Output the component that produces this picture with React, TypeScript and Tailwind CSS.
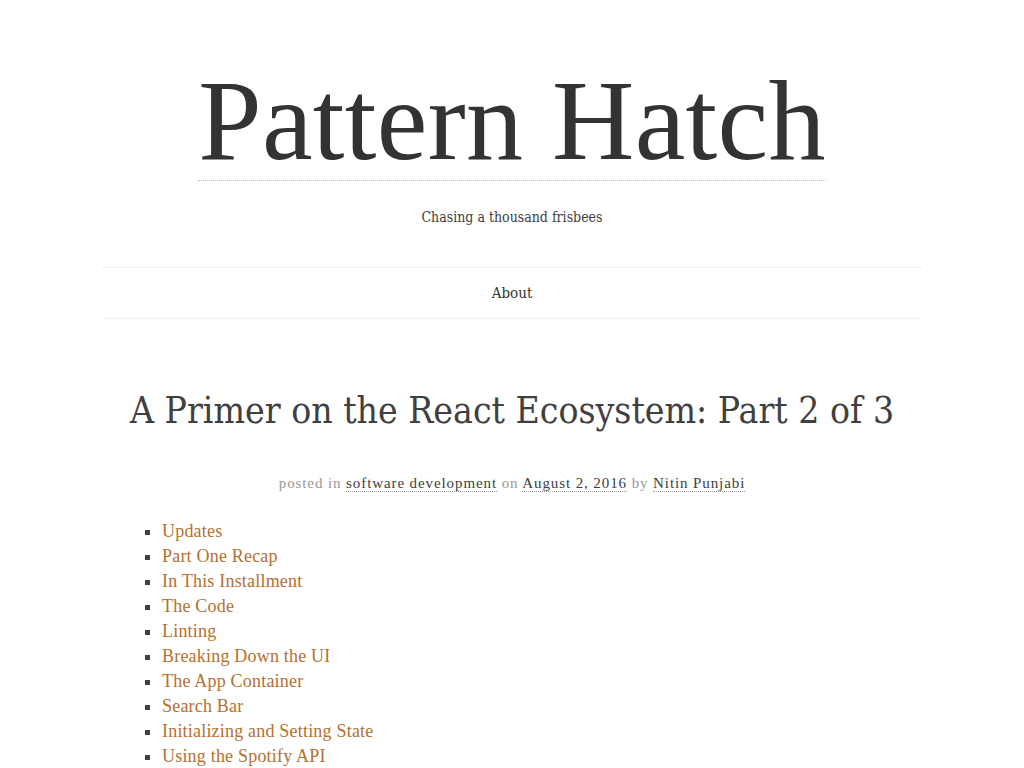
import React from 'react';

const tocItems = [
  'Updates',
  'Part One Recap',
  'In This Installment',
  'The Code',
  'Linting',
  'Breaking Down the UI',
  'The App Container',
  'Search Bar',
  'Initializing and Setting State',
  'Using the Spotify API',
];

const serif = "font-['Liberation_Serif',serif]";
const slab = "font-['DejaVu_Serif',serif]";

export default function App() {
  return (
    <div className="min-h-screen bg-white text-[#404040]">
      {/* Site header */}
      <header className="pt-[65px] text-center">
        <h1 className="inline-block border-b border-dotted border-[#bbbbbb] pb-[3px]">
          <a href="#" className={`${serif} block text-[114px] leading-[112px] text-[#333333] tracking-[0.3px]`}>
            Pattern Hatch
          </a>
        </h1>
        <p className={`${slab} mt-[26px] text-[14px] leading-5 text-[#404040] [font-stretch:condensed]`}>
          Chasing a thousand frisbees
        </p>
      </header>

      {/* Navigation */}
      <nav className="mx-auto mt-[40px] w-[820px] border-y border-[#eeeeee]">
        <ul className="flex justify-center">
          <li>
            <a href="#" className={`${slab} block py-[14px] text-[15px] leading-[22px] text-[#333333] [font-stretch:condensed]`}>
              About
            </a>
          </li>
        </ul>
      </nav>

      {/* Post */}
      <main className="mx-auto w-[780px] pt-[68px]">
        <article>
          <h2 className={`${slab} text-center text-[37px] leading-[48px] text-[#404040] [font-stretch:condensed]`}>
            A Primer on the React Ecosystem: Part 2 of 3
          </h2>
          <div className={`${serif} mt-[36px] text-center text-[15px] leading-6 tracking-[0.9px] text-[#999999]`}>
            posted in{' '}
            <a href="#" className="text-[#404040] border-b border-dotted border-[#999999]">software development</a>
            {' '}on{' '}
            <a href="#" className="text-[#404040] border-b border-dotted border-[#999999]">August 2, 2016</a>
            {' '}by{' '}
            <a href="#" className="text-[#404040] border-b border-dotted border-[#999999]">Nitin Punjabi</a>
          </div>
          <ul className={`${serif} mt-[24px] list-[square] pl-[40px] text-[18px] leading-[25px] tracking-[0.2px] marker:text-[#404040]`}>
            {tocItems.map((item) => (
              <li key={item}>
                <a href="#" className="text-[#b5702f]">{item}</a>
              </li>
            ))}
          </ul>
        </article>
      </main>
    </div>
  );
}
